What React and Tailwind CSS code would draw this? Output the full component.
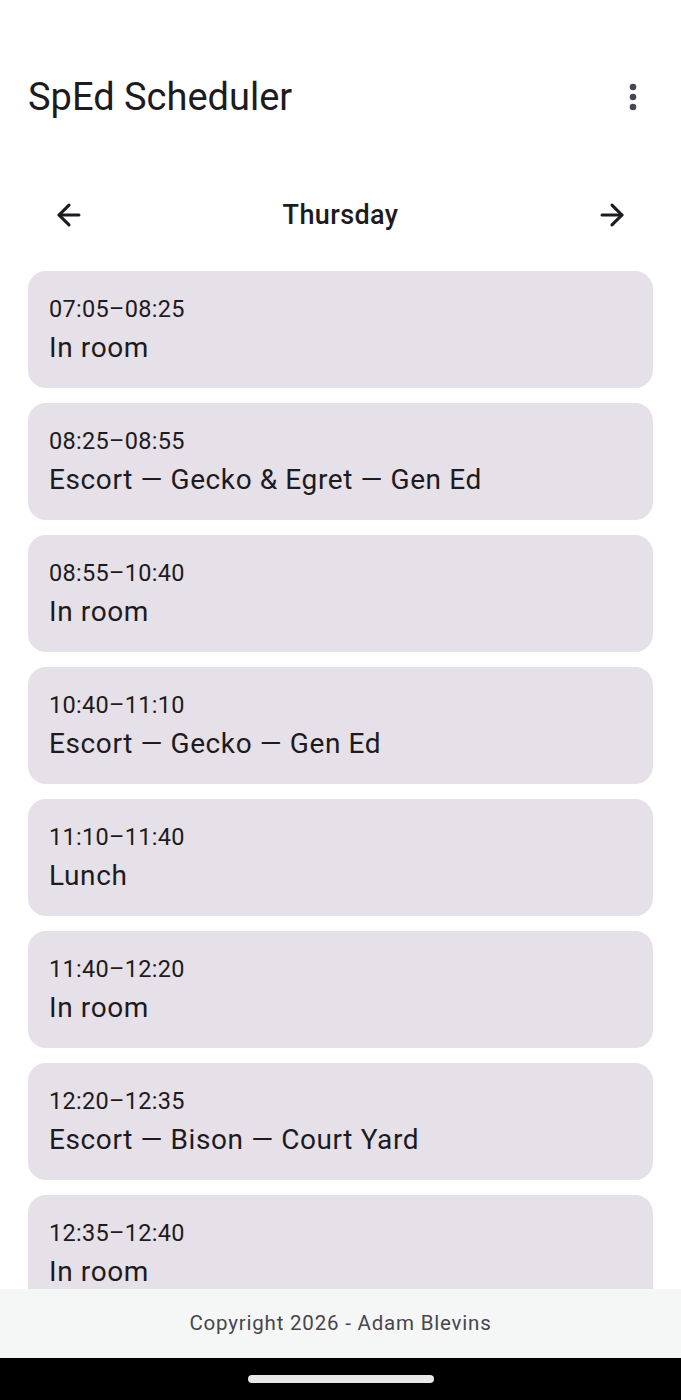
import { ArrowLeft, ArrowRight } from "lucide-react";

const slots = [
  { time: "07:05–08:25", label: "In room" },
  { time: "08:25–08:55", label: "Escort — Gecko & Egret — Gen Ed" },
  { time: "08:55–10:40", label: "In room" },
  { time: "10:40–11:10", label: "Escort — Gecko — Gen Ed" },
  { time: "11:10–11:40", label: "Lunch" },
  { time: "11:40–12:20", label: "In room" },
  { time: "12:20–12:35", label: "Escort — Bison — Court Yard" },
  { time: "12:35–12:40", label: "In room" },
];

function MoreIcon() {
  return (
    <svg width="8" height="28" viewBox="0 0 8 28" className="text-[#49454f]">
      <circle cx="4" cy="4" r="3.3" fill="currentColor" />
      <circle cx="4" cy="14" r="3.3" fill="currentColor" />
      <circle cx="4" cy="24" r="3.3" fill="currentColor" />
    </svg>
  );
}

export default function App() {
  return (
    <div
      className="h-[1400px] w-full flex flex-col bg-white text-[#1d1b20] overflow-hidden"
      style={{ fontFamily: "Roboto, 'Noto Sans', sans-serif" }}
    >
      {/* status bar area */}
      <div className="h-[60px] shrink-0" />

      {/* app bar */}
      <div className="h-[74px] shrink-0 flex items-center justify-between pl-[28px] pr-[44px]">
        <h1 className="text-[38px] leading-none font-normal">SpEd Scheduler</h1>
        <MoreIcon />
      </div>

      <main className="flex-1 min-h-0 overflow-hidden">
        {/* day switcher */}
        <div className="mt-[46px] h-[70px] flex items-center justify-between px-[52px]">
          <ArrowLeft size={34} strokeWidth={2.2} />
          <div className="text-[27px] font-medium tracking-[0.4px]">Thursday</div>
          <ArrowRight size={34} strokeWidth={2.2} />
        </div>

        <div className="mt-[21px] px-[28px] flex flex-col gap-[15px]">
          {slots.map((s, i) => (
            <div
              key={i}
              className="h-[117px] shrink-0 rounded-[18px] bg-[#e6e0e9] pl-[21px] pt-[24px]"
            >
              <div className="text-[23.5px] leading-[28px] tracking-[0.3px]">{s.time}</div>
              <div className="mt-[9px] text-[28px] leading-[32px] tracking-[0.6px]">{s.label}</div>
            </div>
          ))}
        </div>
      </main>

      <footer className="h-[69px] shrink-0 bg-[#f5f6f6] flex items-center justify-center">
        <span className="text-[20.5px] tracking-[0.8px] text-[#49454f]">Copyright 2026 - Adam Blevins</span>
      </footer>

      <div className="h-[42px] shrink-0 bg-black flex items-center justify-center">
        <div className="w-[186px] h-[8px] rounded-full bg-[#e8e8e8]" />
      </div>
    </div>
  );
}
